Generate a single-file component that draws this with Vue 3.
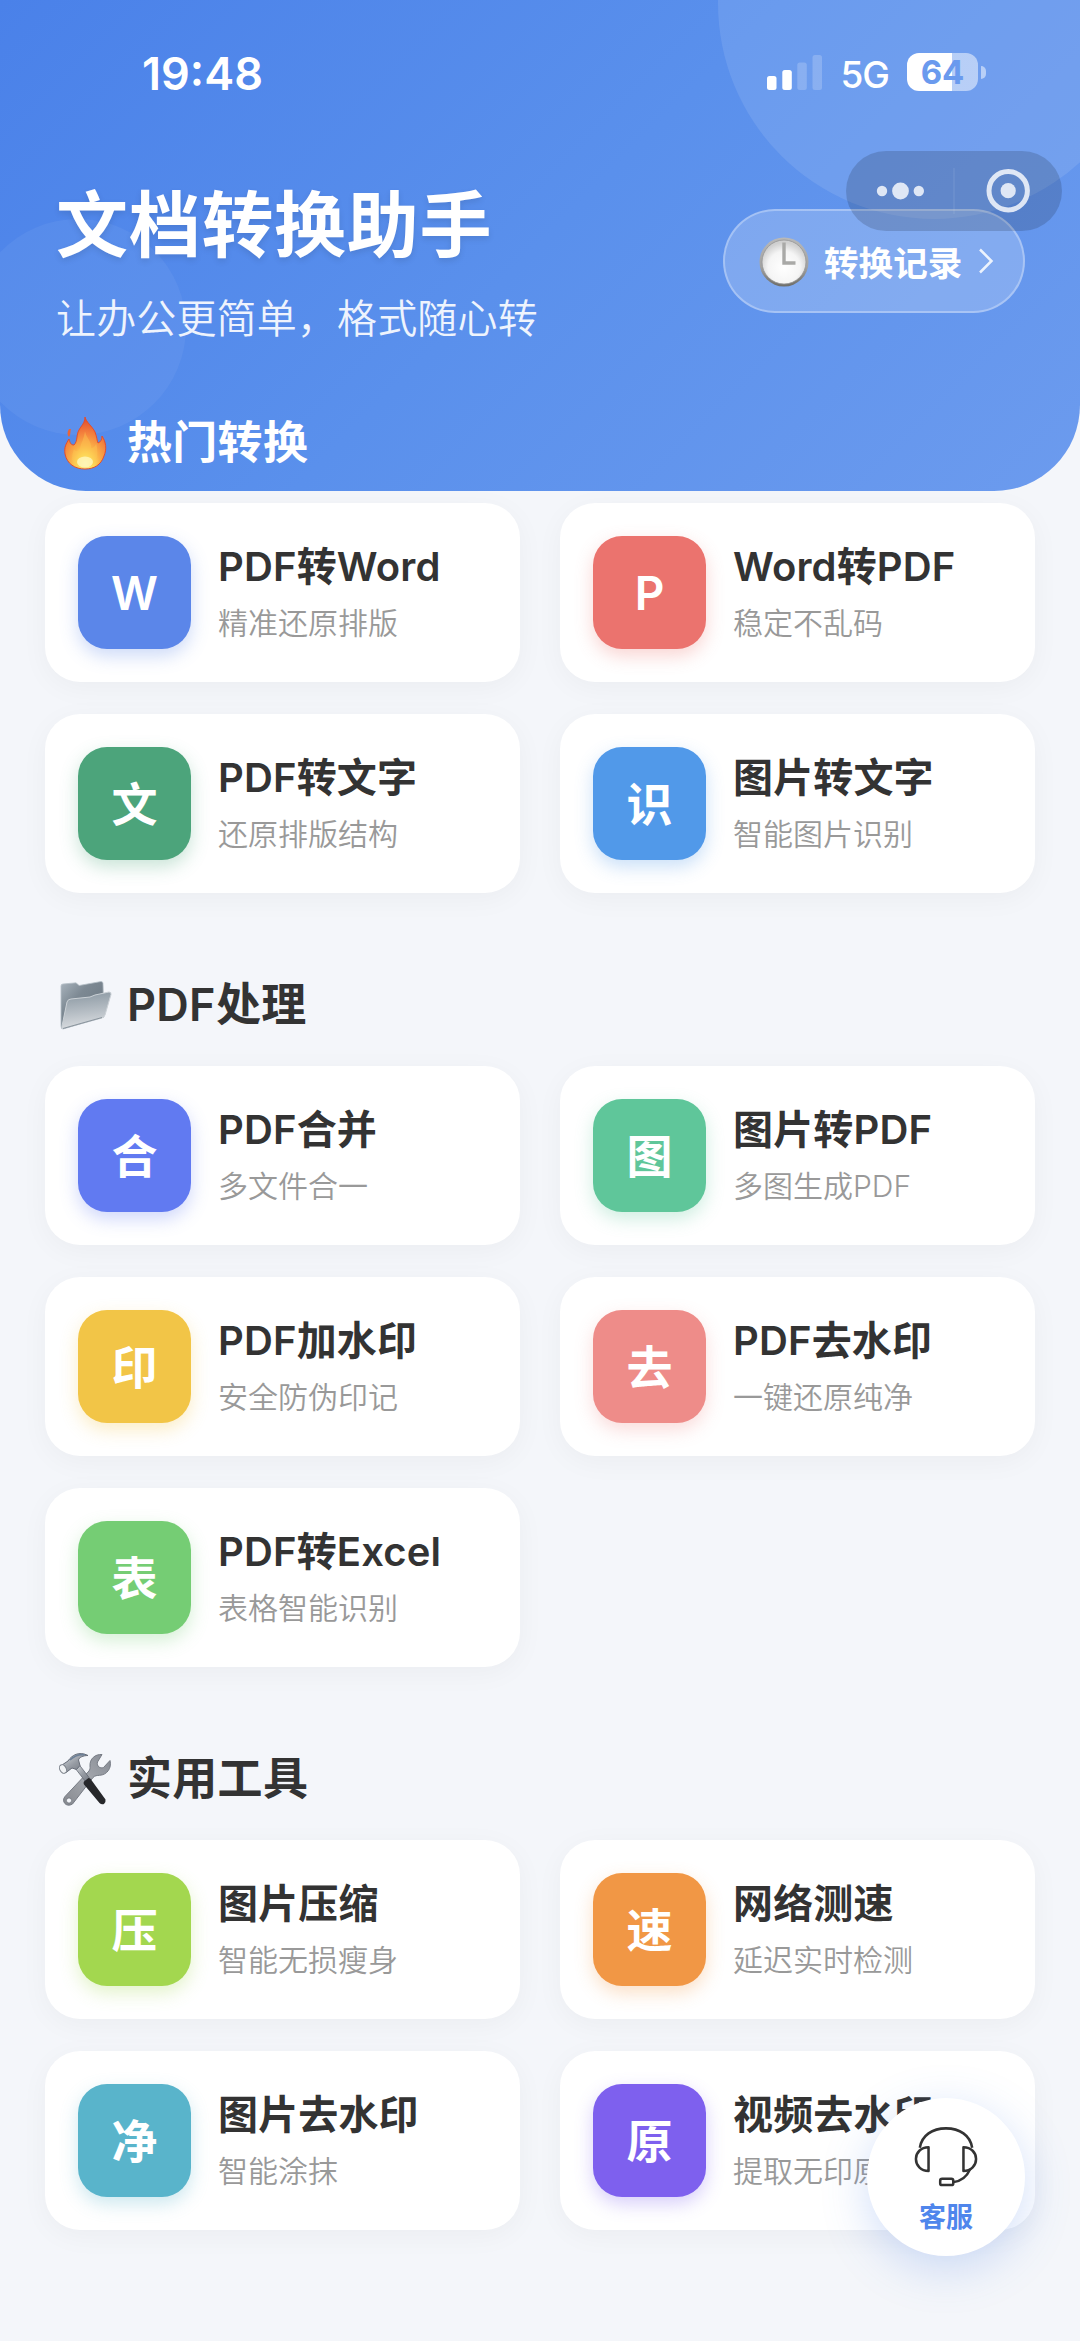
<script setup>
const hot = [
  { mark: 'W', latin: true, title: 'PDF转Word', desc: '精准还原排版', color: '#5b86e9' },
  { mark: 'P', latin: true, title: 'Word转PDF', desc: '稳定不乱码', color: '#eb736e' },
  { mark: '文', title: 'PDF转文字', desc: '还原排版结构', color: '#4ca47b' },
  { mark: '识', title: '图片转文字', desc: '智能图片识别', color: '#5199e9' },
]
const pdf = [
  { mark: '合', title: 'PDF合并', desc: '多文件合一', color: '#617af1' },
  { mark: '图', title: '图片转PDF', desc: '多图生成PDF', color: '#5fc69a' },
  { mark: '印', title: 'PDF加水印', desc: '安全防伪印记', color: '#f2c547' },
  { mark: '去', title: 'PDF去水印', desc: '一键还原纯净', color: '#ee8c89' },
  { mark: '表', title: 'PDF转Excel', desc: '表格智能识别', color: '#75cd74' },
]
const tools = [
  { mark: '压', title: '图片压缩', desc: '智能无损瘦身', color: '#a3d74f' },
  { mark: '速', title: '网络测速', desc: '延迟实时检测', color: '#f19745' },
  { mark: '净', title: '图片去水印', desc: '智能涂抹', color: '#59b4cb' },
  { mark: '原', title: '视频去水印', desc: '提取无印原片', color: '#7e60ee' },
]
const groups = [
  { key: 'hot', items: hot },
  { key: 'pdf', name: 'PDF处理', items: pdf },
  { key: 'tools', name: '实用工具', items: tools },
]
</script>

<template>
  <div class="page">
    <header class="hero">
      <i class="bubble bubble-right"></i>
      <i class="bubble bubble-left"></i>

      <div class="status">
        <span class="time">19:48</span>
        <div class="status-right">
          <svg class="signal" width="56" height="36" viewBox="0 0 56 36" fill="#fff">
            <rect x="0" y="21" width="9.5" height="14" rx="2.5" />
            <rect x="15.3" y="15" width="9.5" height="20" rx="2.5" />
            <rect x="30.3" y="7.5" width="9.5" height="27.5" rx="2.5" opacity=".2" />
            <rect x="45.5" y="0" width="9.5" height="35" rx="2.5" opacity=".2" />
          </svg>
          <span class="net">5G</span>
          <div class="battery"><span>64</span></div>
          <i class="battery-cap"></i>
        </div>
      </div>

      <div class="intro">
        <div class="intro-text">
          <h1>文档转换助手</h1>
          <p>让办公更简单，格式随心转</p>
        </div>
        <div class="record">
          <svg width="50" height="50" viewBox="0 0 50 50">
            <defs>
              <linearGradient id="rim" x1="0" y1="0" x2="0" y2="1">
                <stop offset="0" stop-color="#b9b9b9" />
                <stop offset=".6" stop-color="#a2a2a2" />
                <stop offset="1" stop-color="#6d6d69" />
              </linearGradient>
              <radialGradient id="face" cx=".5" cy=".62" r=".56">
                <stop offset="0" stop-color="#fff" />
                <stop offset=".65" stop-color="#f5f5f5" />
                <stop offset="1" stop-color="#d0d0d0" />
              </radialGradient>
            </defs>
            <circle cx="25" cy="25" r="24.5" fill="url(#rim)" />
            <circle cx="25" cy="25" r="22" fill="url(#face)" stroke="#969696" stroke-width=".8" />
            <path d="M25 5.5V26H36.5" fill="none" stroke="#a9a9a7" stroke-width="3.4" />
          </svg>
          <span>转换记录</span>
          <svg class="arrow" width="16" height="28" viewBox="0 0 16 28">
            <path d="M2 2.5L13.5 14L2 25.5" fill="none" stroke="#fff" stroke-opacity=".85" stroke-width="2.5" />
          </svg>
        </div>
      </div>

      <h2 class="heading heading-light">
        <svg width="56" height="56" viewBox="0 0 56 56">
          <defs>
            <radialGradient id="flame" cx=".5" cy=".9" r=".85">
              <stop offset="0" stop-color="#fffbb0" />
              <stop offset=".2" stop-color="#fee45c" />
              <stop offset=".42" stop-color="#fbb047" />
              <stop offset=".72" stop-color="#f37d3c" />
              <stop offset="1" stop-color="#e4502e" />
            </radialGradient>
          </defs>
          <path d="M28 2C29 7 35 11 38 17C40 22 40 26 41 28C44 27 45 24 45 21C49 27 50 34 47 41C44 50 37 54 28 54C18 54 10 49 8 39C7 32 9 29 12 24C13 28 14 30 17 30C21 26 19 20 22 15C24 11 28 8 28 2Z" fill="url(#flame)" stroke="#e34d2d" stroke-width="1" />
          <path d="M12 14C10 17 10 20 12 22C14 19 13 17 14 14Z" fill="#e96538" />
          <path d="M28 16C29 23 35 26 34 33C37 33 39 30 39 28C42 38 40 47 35 51C30 54 22 54 18 50C13 44 16 37 17 34C19 38 22 36 23 33C24 28 27 24 28 16Z" fill="#fdc551" opacity=".45" />
          <ellipse cx="28" cy="47" rx="8" ry="5.5" fill="#fffccb" opacity=".7" />
        </svg>
        <span>热门转换</span>
      </h2>

      <div class="capsule">
        <svg width="216" height="80" viewBox="0 0 216 80" fill="#fff" fill-opacity=".8">
          <circle cx="36" cy="40" r="5.2" />
          <circle cx="54.5" cy="40" r="8.4" />
          <circle cx="72.8" cy="40" r="5.2" />
          <rect x="107.5" y="17" width="1" height="46" fill-opacity=".12" />
          <circle cx="162.2" cy="39.7" r="19.2" fill="none" stroke="#fff" stroke-opacity=".8" stroke-width="5" />
          <circle cx="162.2" cy="39.7" r="7.6" />
        </svg>
      </div>
    </header>

    <section v-for="g in groups" :key="g.key" class="group">
      <h2 v-if="g.name" class="heading">
        <svg v-if="g.key === 'pdf'" width="56" height="56" viewBox="0 0 56 56">
          <defs>
            <linearGradient id="back" x1="0" y1="0" x2="1" y2="1">
              <stop offset="0" stop-color="#a9b4bd" />
              <stop offset=".35" stop-color="#7d8993" />
              <stop offset="1" stop-color="#66727c" />
            </linearGradient>
            <linearGradient id="front" x1=".4" y1="0" x2=".55" y2="1">
              <stop offset="0" stop-color="#8c99a3" />
              <stop offset=".5" stop-color="#b3bbc2" />
              <stop offset="1" stop-color="#dcdfe2" />
            </linearGradient>
          </defs>
          <path d="M4 9Q4 7 6 7L17 6Q19 5.500 20 6.500L22 8.500L44 4.500Q46 4.500 46 6.500L47 40L6 52Q4 52 4 49Z" fill="url(#back)" stroke="#b6c0c8" stroke-width=".8" />
          <path d="M10 25Q11 22 14 22L33 20L38 18L52 15Q54.500 15 54 17.500L48 38Q47 40 45 41L6 51.500Q4.500 52 5 49Z" fill="url(#front)" stroke="#cbd1d6" stroke-width="1" />
          <path d="M6 51.500L45 40.500" stroke="#89949d" stroke-width="1" />
        </svg>
        <svg v-else width="56" height="56" viewBox="0 0 56 56">
          <defs>
            <linearGradient id="steel" x1="0" y1="0" x2="1" y2="1">
              <stop offset="0" stop-color="#d8dce1" />
              <stop offset=".5" stop-color="#969ba3" />
              <stop offset="1" stop-color="#6b7079" />
            </linearGradient>
            <linearGradient id="wrench" x1="1" y1="0" x2="0" y2="1">
              <stop offset="0" stop-color="#858a93" />
              <stop offset=".5" stop-color="#a5a8ae" />
              <stop offset="1" stop-color="#85888e" />
            </linearGradient>
          </defs>
          <path d="M45 3.500C38 3 32.500 8 33 15C33.200 17 33 18.500 32 20L8 45.500C4 50 9 57 15.500 53L36 26.500C38 24.500 40 24.500 42.500 24.300C50 24 55 17 53 9.500L46.500 16.500C43 18 39.500 15 40.500 11Z" fill="url(#wrench)" stroke="#767b84" stroke-width="1" />
          <circle cx="12" cy="49.500" r="2.600" fill="#f4f6fa" stroke="#70757d" stroke-width=".8" />
          <path d="M18 17L22 13.500L34 29L30 32.500Z" fill="url(#steel)" stroke="#646a74" stroke-width=".8" />
          <path d="M27 30.500L31.500 27Q33 27 34 28.500L48.500 48.500Q49 51.500 47 53Q44.500 54 42.500 52L27 33.500Q26 32 27 30.500Z" fill="#27282b" />
          <path d="M5 14L11 10C15 4 22 0 31 4.500C26 4.500 22 6.500 21.500 9L23 14.500L19.500 18.500L15 17L9 21.500Z" fill="url(#steel)" stroke="#666c78" stroke-width="1" />
          <path d="M13 9C18 4 22 3 28 3.800" stroke="#6d8097" stroke-width="1.600" fill="none" />
          <ellipse cx="6" cy="18" rx="3.200" ry="4.600" fill="#f1f3f5" stroke="#7b818a" stroke-width="1" transform="rotate(-28 6 18)" />
        </svg>
        <span>{{ g.name }}</span>
      </h2>
      <div class="grid">
        <article v-for="c in g.items" :key="c.title" class="card">
          <div
            class="mark"
            :class="{ 'mark-latin': c.latin }"
            :style="{ background: c.color, boxShadow: `0 7px 18px ${c.color}4d` }"
          >{{ c.mark }}</div>
          <div class="info">
            <h3>{{ c.title }}</h3>
            <p>{{ c.desc }}</p>
          </div>
        </article>
      </div>
    </section>

    <div class="service">
      <svg width="64" height="61" viewBox="0 0 66 62" fill="none" stroke="#333" stroke-width="2.600" stroke-linejoin="round">
        <path d="M6 22C8 9 19 2 33 2S58 9 60 22" />
        <path d="M15 21.500V46C7 46 2 40 2 33.500S7 21.500 15 21.500Z" />
        <path d="M51 21.500V46C59 46 64 40 64 33.500S59 21.500 51 21.500Z" />
        <path d="M58 44C54 53 48 57 40 57.500" />
        <rect x="27" y="54" width="13.500" height="6.500" rx="2" />
      </svg>
      <span>客服</span>
    </div>
  </div>
</template>

<style>
body {
  background: #f4f6fa;
}
</style>

<style scoped>
.page {
  position: relative;
  width: 1080px;
  height: 2341px;
  overflow: hidden;
  background: #f4f6fa;
  color: #333;
  font-family: Inter, "Noto Sans CJK SC", sans-serif;
}
h1, h2, h3, p {
  margin: 0;
}
svg {
  display: block;
  flex: none;
}
.hero {
  position: relative;
  height: 491px;
  overflow: hidden;
  border-radius: 0 0 86px 86px;
  background: linear-gradient(135deg, #4a81e9 0%, #5a90ec 50%, #6c9bee 100%);
  color: #fff;
}
.bubble {
  position: absolute;
  border-radius: 50%;
}
.bubble-right {
  top: -213px;
  left: 718px;
  width: 432px;
  height: 432px;
  background: rgba(255, 255, 255, 0.1);
}
.bubble-left {
  top: 219px;
  left: -30px;
  width: 216px;
  height: 216px;
  background: rgba(255, 255, 255, 0.05);
}
.status {
  position: relative;
  display: flex;
  justify-content: space-between;
  align-items: center;
  height: 148px;
  padding: 0 94px 0 142px;
  box-sizing: border-box;
}
.time {
  margin-top: -2px;
  font-size: 45px;
  font-weight: 600;
}
.status-right {
  display: flex;
  align-items: center;
  height: 38px;
  margin-top: -4px;
}
.signal {
  margin-top: 2px;
}
.net {
  margin: 4px 0 0 17px;
  font-size: 37px;
  font-weight: 500;
  letter-spacing: -1px;
}
.battery {
  width: 71px;
  height: 38px;
  margin-left: 18px;
  border-radius: 12px;
  background: linear-gradient(90deg, #fff 45px, rgba(255, 255, 255, 0.5) 45px);
  color: #6a9aee;
  font-size: 33px;
  font-weight: 700;
  line-height: 38px;
  text-align: center;
}
.battery-cap {
  width: 5px;
  height: 13px;
  margin-left: 3px;
  border-radius: 0 6px 6px 0;
  background: rgba(255, 255, 255, 0.5);
}
.intro {
  position: relative;
  display: flex;
  justify-content: space-between;
  align-items: flex-start;
  height: 264px;
  padding: 24px 55px 0 56px;
  box-sizing: border-box;
}
h1 {
  font-size: 72px;
  font-weight: 700;
  line-height: 106px;
  letter-spacing: 0.7px;
  text-shadow: 0 3px 6px rgba(0, 0, 0, 0.1);
}
.intro p {
  margin-top: 11px;
  font-size: 40px;
  font-weight: 350;
  line-height: 60px;
  letter-spacing: 0.15px;
  opacity: 0.9;
}
.record {
  display: flex;
  align-items: center;
  width: 302px;
  height: 104px;
  margin-top: 37px;
  padding-left: 34px;
  box-sizing: border-box;
  border: 2px solid rgba(255, 255, 255, 0.3);
  border-radius: 52px;
  background: rgba(255, 255, 255, 0.2);
  font-size: 34.6px;
  font-weight: 600;
}
.record svg:first-child {
  margin-top: 2px;
}
.record span {
  margin-left: 15px;
}
.record .arrow {
  margin-left: 16px;
}
.heading {
  display: flex;
  align-items: center;
  height: 60px;
  padding-left: 57px;
  font-size: 45px;
  font-weight: 600;
  line-height: 60px;
}
.heading span {
  margin-left: 14px;
  letter-spacing: 0.3px;
}
.heading-light {
  position: relative;
  padding-top: 1px;
}
.capsule {
  position: absolute;
  top: 151px;
  left: 846px;
  width: 216px;
  height: 80px;
  border-radius: 40px;
  background: rgba(0, 0, 0, 0.15);
}
.group {
  margin-bottom: 82px;
}
.group:first-of-type {
  padding-top: 12px;
}
.grid {
  display: grid;
  grid-template-columns: 475px 475px;
  gap: 32px 40px;
  padding: 0 45px;
}
.group .heading {
  margin-bottom: 31px;
}
.card {
  display: flex;
  align-items: center;
  height: 179px;
  padding: 0 33px;
  box-sizing: border-box;
  border-radius: 35px;
  background: #fff;
  box-shadow: 0 6px 29px rgba(0, 0, 0, 0.04);
}
.mark {
  display: flex;
  flex: none;
  align-items: center;
  justify-content: center;
  width: 113px;
  height: 113px;
  padding-bottom: 5px;
  box-sizing: border-box;
  border-radius: 29px;
  color: #fff;
  font-size: 46px;
  font-weight: 600;
}
.mark-latin {
  padding-bottom: 0;
}
.info {
  margin-left: 27px;
  white-space: nowrap;
}
h3 {
  font-size: 40px;
  font-weight: 600;
  line-height: 54px;
  letter-spacing: 0.15px;
}
.info p {
  margin-top: 8px;
  margin-bottom: 1px;
  color: #999;
  font-size: 30px;
  font-weight: 350;
  line-height: 42px;
}
.service {
  position: absolute;
  top: 2098px;
  left: 867px;
  display: flex;
  flex-direction: column;
  align-items: center;
  width: 158px;
  height: 158px;
  padding-top: 28px;
  box-sizing: border-box;
  border-radius: 50%;
  background: #fff;
  box-shadow: 0 12px 46px rgba(74, 129, 233, 0.25);
  color: #4f86ec;
  font-size: 27px;
  font-weight: 600;
}
.service span {
  margin-top: 12px;
  line-height: 38px;
}
</style>
